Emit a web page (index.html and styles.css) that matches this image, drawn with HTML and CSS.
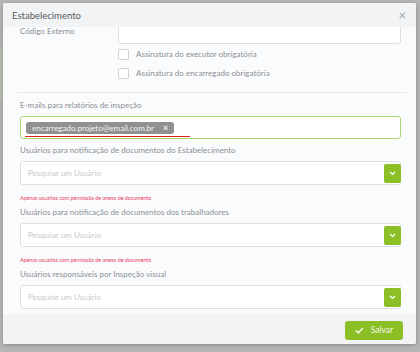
FILE: index.html
```html
<!DOCTYPE html>
<html lang="pt-br">
<head>
    <meta charset="UTF-8">
    <meta name="viewport" content="width=device-width, initial-scale=1.0">
    <title>Estabelecimento</title>
    <link rel="stylesheet" href="styles.css">
</head>
<body>

    <!-- Janela modal -->
    <div class="modal">
        <div class="modal-header">
            <h2>Estabelecimento</h2>
            <span class="close">&times;</span>
        </div>

        <div class="modal-body">
            <div class="scroll">
                <!-- Código externo -->
                <div class="row">
                    <label class="side-label">Código Externo</label>
                    <div class="side-field">
                        <input type="text" class="text-input">
                        <label class="check"><span class="box"></span>Assinatura do executor obrigatória</label>
                        <label class="check"><span class="box"></span>Assinatura do encarregado obrigatória</label>
                    </div>
                </div>

                <hr>

                <!-- E-mails -->
                <label class="field-label">E-mails para relatórios de inspeção</label>
                <div class="tags-input">
                    <span class="tag">encarregado.projeto@email.com.br <b>&times;</b></span>
                </div>

                <label class="field-label">Usuários para notificação de documentos do Estabelecimento</label>
                <div class="select">
                    <span>Pesquise um Usuário</span>
                    <span class="select-btn"><svg width="7" height="5" viewBox="0 0 7 5"><path d="M1 1l2.5 2.5L6 1" fill="none" stroke="#fff" stroke-width="1.2"/></svg></span>
                </div>
                <p class="hint">Apenas usuários com permissão de anexo de documento</p>

                <label class="field-label">Usuários para notificação de documentos dos trabalhadores</label>
                <div class="select">
                    <span>Pesquise um Usuário</span>
                    <span class="select-btn"><svg width="7" height="5" viewBox="0 0 7 5"><path d="M1 1l2.5 2.5L6 1" fill="none" stroke="#fff" stroke-width="1.2"/></svg></span>
                </div>
                <p class="hint">Apenas usuários com permissão de anexo de documento</p>

                <label class="field-label">Usuários responsáveis por Inspeção visual</label>
                <div class="select">
                    <span>Pesquise um Usuário</span>
                    <span class="select-btn"><svg width="7" height="5" viewBox="0 0 7 5"><path d="M1 1l2.5 2.5L6 1" fill="none" stroke="#fff" stroke-width="1.2"/></svg></span>
                </div>
            </div>
        </div>

        <div class="modal-footer">
            <button class="btn-save"><svg width="9" height="7" viewBox="0 0 9 7"><path d="M1 3.5l2.3 2.3L8 1" fill="none" stroke="#fff" stroke-width="1.3"/></svg>Salvar</button>
        </div>
    </div>

</body>
</html>
```

FILE: styles.css
```css
/* Fundo escurecido atrás do modal */
body {
    font-family: Lato, "Open Sans", sans-serif;
    margin: 0;
    padding: 3px 4px 0 3px;
    background:
        linear-gradient(to bottom, transparent 50px, #b9bfae 50px, #b9bfae 100px, transparent 100px) left / 3px 100% no-repeat,
        #b5b6b6;
    height: 352px;
    box-sizing: border-box;
    overflow: hidden;
}

/* Modal */
.modal {
    width: 413px;
    height: 341px;
    background-color: #fafbfc;
    border-radius: 2px;
    box-shadow: 0 1px 4px rgba(0,0,0,0.25);
    display: flex;
    flex-direction: column;
    overflow: hidden;
}

.modal-header {
    height: 24px;
    flex-shrink: 0;
    background-color: #f2f3f4;
    display: flex;
    align-items: center;
    justify-content: space-between;
    padding: 0 10px 0 9px;
}

.modal-header h2 {
    margin: 0;
    font-size: 9.5px;
    font-weight: normal;
    color: #555a60;
}

.close {
    font-size: 13px;
    color: #a0a4a8;
}

.modal-body {
    flex: 1;
    overflow: hidden;
    padding: 0 15px 0 17px;
}

/* conteúdo rolado para baixo */
.scroll {
    margin-top: -14px;
}

.row {
    display: flex;
}

.side-label {
    width: 98px;
    font-size: 8px;
    color: #8a8f95;
    padding-top: 13px;
}

.side-field {
    flex: 1;
}

.text-input {
    display: block;
    width: 100%;
    height: 31px;
    box-sizing: border-box;
    border: 1px solid #dcdfe2;
    border-radius: 3px;
    background: #fff;
    margin: 0;
}

.check {
    display: flex;
    align-items: center;
    font-size: 8px;
    color: #8a8f95;
    height: 18px;
    margin-top: 1px;
}

.check .box {
    width: 9px;
    height: 9px;
    border: 1px solid #cfd3d6;
    border-radius: 1px;
    background: #fff;
    margin-right: 7px;
}

hr {
    border: none;
    border-top: 1px solid #e6e8ea;
    margin: 10px 0 0 -3px;
    width: 390px;
}

.field-label {
    display: block;
    font-size: 8px;
    color: #8a8f95;
    margin: 6px 0 6px;
}

hr + .field-label {
    margin-top: 7px;
}

.tags-input {
    height: 23px;
    box-sizing: border-box;
    border: 1px solid #a9d66c;
    border-radius: 3px;
    background: #fff;
    padding: 0 5px;
    display: flex;
    align-items: center;
    position: relative;
}

/* sublinhado do corretor ortográfico */
.tags-input::after {
    content: "";
    position: absolute;
    left: 4px;
    top: 19px;
    width: 165px;
    height: 1px;
    background: #e0211b;
}

.tag {
    display: inline-block;
    background-color: #8e9092;
    color: #f4f4f4;
    font-size: 8px;
    line-height: 12px;
    height: 12px;
    padding: 0 6px 0 6px;
    border-radius: 3px;
}

.tag b {
    font-size: 9px;
    margin-left: 7px;
}

.select {
    height: 24px;
    box-sizing: border-box;
    border: 1px solid #dcdfe2;
    border-radius: 3px;
    background: #fff;
    display: flex;
    align-items: center;
    justify-content: space-between;
    padding-left: 7px;
    font-size: 8px;
    color: #c7cacd;
}

.select-btn {
    width: 17px;
    height: 19px;
    background-color: #8cbf26;
    border-radius: 2px;
    display: flex;
    align-items: center;
    justify-content: center;
    margin-right: -1px;
}

.hint {
    font-size: 5.3px;
    color: #e83a63;
    margin: 10px 0 0;
}

.hint + .field-label {
    margin-top: 6px;
}

/* Rodapé */
.modal-footer {
    height: 30px;
    flex-shrink: 0;
    background-color: #f2f3f4;
    display: flex;
    align-items: center;
    justify-content: flex-end;
    padding-right: 13px;
}

.btn-save {
    width: 58px;
    height: 19px;
    background-color: #8cbf26;
    color: #f2f8e6;
    border: none;
    border-radius: 3px;
    font-family: inherit;
    font-size: 8.5px;
    display: flex;
    align-items: center;
    justify-content: center;
    gap: 7px;
    padding: 0;
    margin-top: 2px;
}
```
